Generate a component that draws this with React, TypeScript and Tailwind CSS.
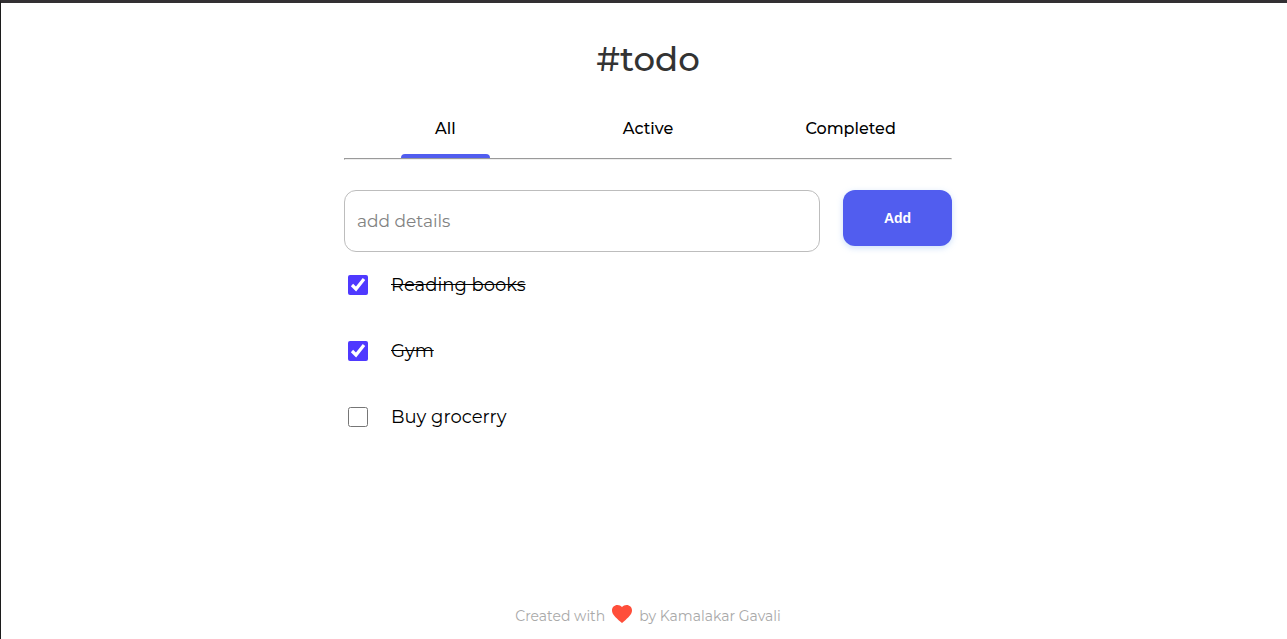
import { useState } from "react";

type Filter = "All" | "Active" | "Completed";
type Todo = { id: number; text: string; done: boolean };

const filters: Filter[] = ["All", "Active", "Completed"];

const initialTodos: Todo[] = [
  { id: 1, text: "Reading books", done: true },
  { id: 2, text: "Gym", done: true },
  { id: 3, text: "Buy grocerry", done: false },
];

function Tabs({ current, onChange }: { current: Filter; onChange: (f: Filter) => void }) {
  return (
    <nav className="mt-[33px] grid grid-cols-3">
      {filters.map((name) => (
        <button
          key={name}
          type="button"
          onClick={() => onChange(name)}
          className="flex cursor-pointer flex-col items-center text-base leading-[26px] font-medium text-black"
        >
          {name}
          <span
            className={
              name === current
                ? "mt-3 h-1 w-[89px] rounded-t bg-[#515def]"
                : "mt-3 h-1 w-[89px]"
            }
          />
        </button>
      ))}
    </nav>
  );
}

function TodoItem({ todo, onToggle }: { todo: Todo; onToggle: () => void }) {
  return (
    <li>
      <label className="flex cursor-pointer items-center gap-[23px] pl-1">
        <input
          type="checkbox"
          checked={todo.done}
          onChange={onToggle}
          className="size-5 accent-[#4f39ff]"
        />
        <span
          className={
            todo.done ? "text-lg leading-6 text-black line-through" : "text-lg leading-6 text-black"
          }
        >
          {todo.text}
        </span>
      </label>
    </li>
  );
}

export default function App() {
  const [filter, setFilter] = useState<Filter>("All");
  const [todos, setTodos] = useState<Todo[]>(initialTodos);
  const [draft, setDraft] = useState("");

  const visible = todos.filter(
    (t) => filter === "All" || (filter === "Completed" ? t.done : !t.done),
  );

  const toggle = (id: number) =>
    setTodos(todos.map((t) => (t.id === id ? { ...t, done: !t.done } : t)));

  const add = (e: React.FormEvent) => {
    e.preventDefault();
    const text = draft.trim();
    if (!text) return;
    setTodos([...todos, { id: Date.now(), text, done: false }]);
    setDraft("");
  };

  return (
    <div className="flex min-h-screen flex-col items-center border-t-3 border-l border-t-[#333033] border-l-[#1c1c1c] bg-white pl-2 font-['Montserrat','Inter',sans-serif]">
      <main className="w-full max-w-[608px] grow pt-8">
        <h1 className="text-center text-[34px] leading-[48px] font-medium text-[#333333]">#todo</h1>
        <Tabs current={filter} onChange={setFilter} />
        <hr className="h-0 border border-t-[#9a9a9a] border-r-[#eeeeee] border-b-[#eeeeee] border-l-[#9a9a9a]" />

        <form onSubmit={add} className="mt-[30px] flex items-start gap-[23px]">
          <input
            type="text"
            aria-label="add details"
            placeholder="add details"
            value={draft}
            onChange={(e) => setDraft(e.target.value)}
            className="h-[62px] min-w-0 flex-1 rounded-xl border border-[#bdbdbd] px-3 text-[17px] placeholder:text-[#828282]"
          />
          <button
            type="submit"
            className="h-14 w-[109px] cursor-pointer rounded-xl bg-[#515def] font-['Liberation_Sans',sans-serif] text-sm font-bold text-white shadow-[0_2px_6px_rgba(127,177,243,0.4)]"
          >
            Add
          </button>
        </form>

        <ul className="mt-[21px] flex flex-col gap-[42px]">
          {visible.map((t) => (
            <TodoItem key={t.id} todo={t} onToggle={() => toggle(t.id)} />
          ))}
        </ul>
      </main>

      <footer className="flex items-center gap-[7px] pb-[11px] text-sm leading-6 text-[#a9a9a9]">
        <span>Created with</span>
        <svg viewBox="0 0 20 18" className="mb-1 h-[18px] w-5 fill-[#ff4e3a]" aria-hidden="true">
          <path d="M10 18 8.5 16.7C3.4 12.1 0 9 0 5.4 0 2.4 2.4 0 5.4 0 7.2 0 8.9.8 10 2.1 11.1.8 12.8 0 14.6 0 17.6 0 20 2.4 20 5.4 20 9 16.6 12.1 11.5 16.7Z" />
        </svg>
        <span>by Kamalakar Gavali</span>
      </footer>
    </div>
  );
}
